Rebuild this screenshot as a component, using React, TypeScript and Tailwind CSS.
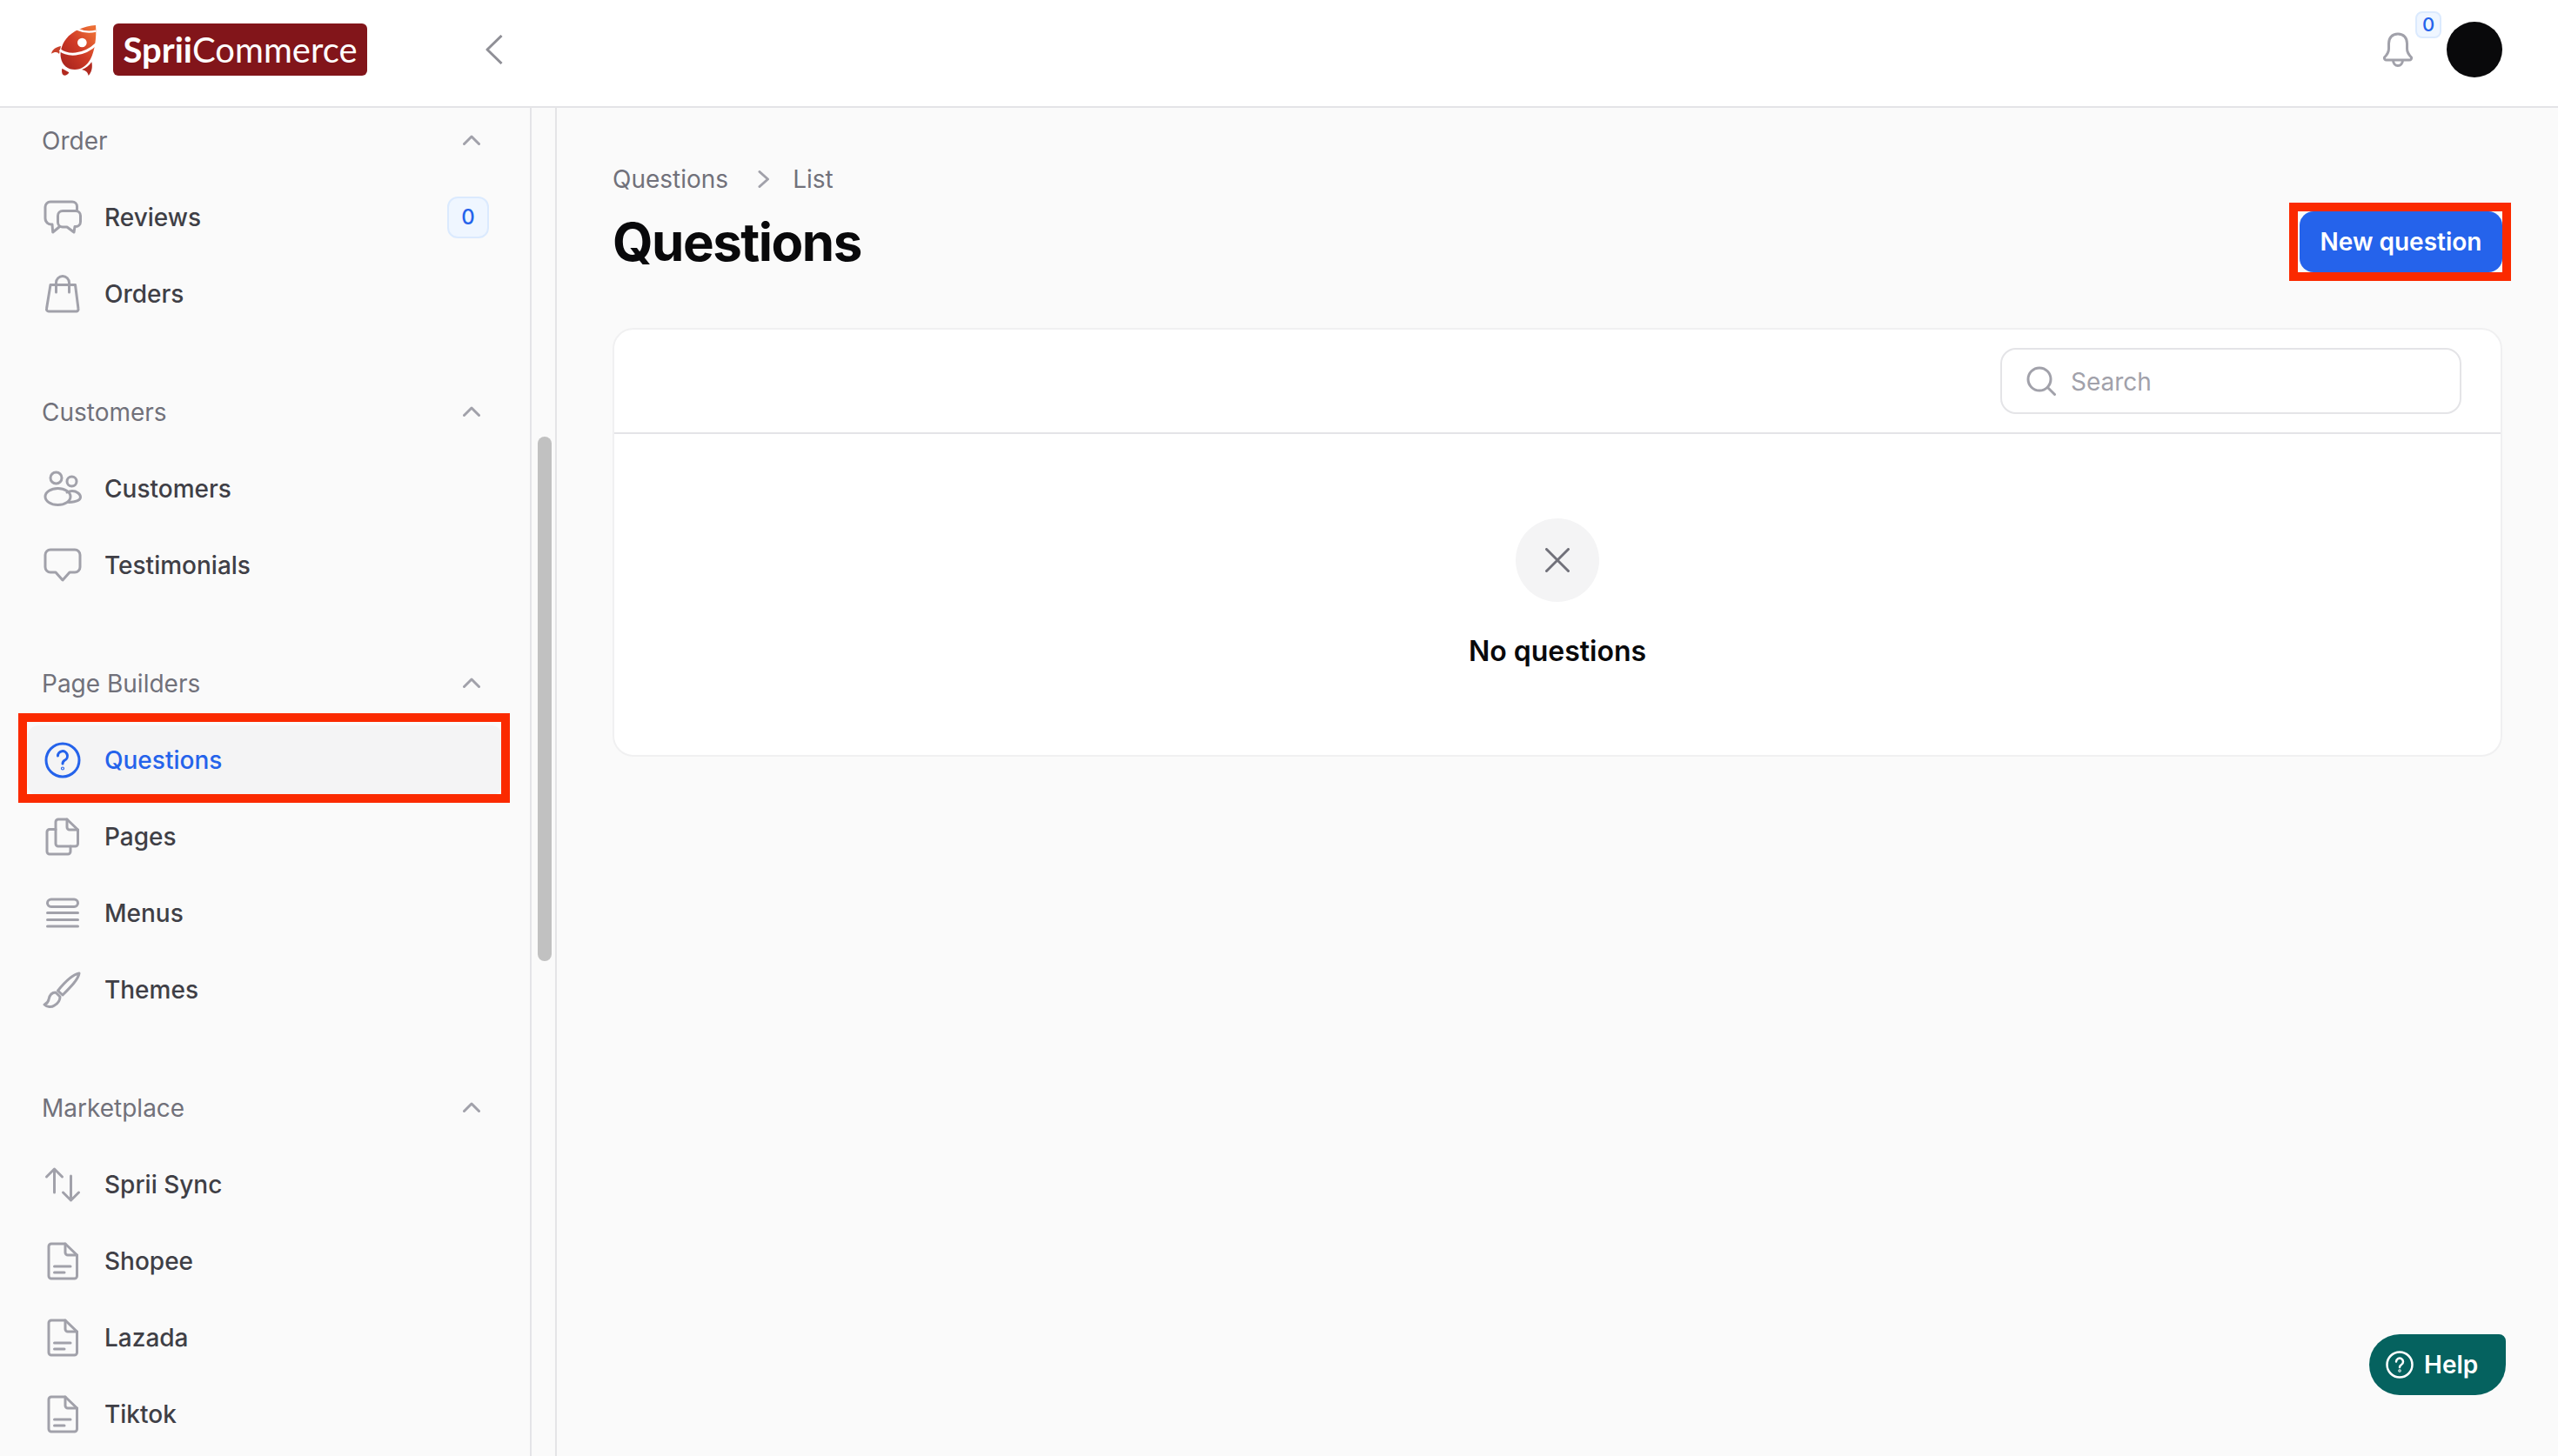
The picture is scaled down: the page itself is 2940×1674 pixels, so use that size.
import React from 'react';

// stroke icons drawn on a 44 box, same weight as the source icon set
const Icon = ({ children, className = 'text-[#a1a1aa]' }: { children: React.ReactNode; className?: string }) => (
  <svg
    width="44"
    height="44"
    viewBox="0 0 44 44"
    fill="none"
    stroke="currentColor"
    strokeWidth="3"
    strokeLinecap="round"
    strokeLinejoin="round"
    className={`shrink-0 overflow-visible ${className}`}
  >
    {children}
  </svg>
);

const ReviewsIcon = () => (
  <Icon>
    <path d="M38.5 13V9.5A5.5 5.5 0 0 0 33 4H8A6 6 0 0 0 2 10V23A7 7 0 0 0 10 30L10.7 39L18 33" />
    <path d="M22 14.5H37A5.5 5.5 0 0 1 42.5 20V27A5.5 5.5 0 0 1 37 32.5H36L35 39L27 33H22A5.5 5.5 0 0 1 16.5 27.5V20A5.5 5.5 0 0 1 22 14.5Z" />
  </Icon>
);

const OrdersIcon = () => (
  <Icon>
    <path d="M8 11.5H36.5L40 39A2.5 2.5 0 0 1 38 42H6A2.5 2.5 0 0 1 3.5 39Z" />
    <path d="M14.5 20V9A7.5 7.5 0 0 1 29.5 9V20" />
  </Icon>
);

const CustomersIcon = () => (
  <Icon>
    <circle cx="14.5" cy="9.5" r="6.5" />
    <circle cx="32.5" cy="13.5" r="5.5" />
    <ellipse cx="16.5" cy="31" rx="14.5" ry="9.5" />
    <path d="M27 26C29 25 31 24.5 33 24.5C38 24.5 42.5 28 42.5 31.5C42.5 35 38 37 29 37.5" />
  </Icon>
);

const TestimonialsIcon = () => (
  <Icon>
    <path d="M8 4H36A6 6 0 0 1 42 10V24A6 6 0 0 1 36 30H30L22 39L14 30H8A6 6 0 0 1 2 24V10A6 6 0 0 1 8 4Z" />
  </Icon>
);

const QuestionsIcon = () => (
  <Icon className="text-[#2563eb]">
    <circle cx="22" cy="22" r="19" />
    <path d="M16.5 17a5.5 5.5 0 1 1 8 5c-1.5.9-2.5 2-2.5 4" />
    <circle cx="22" cy="31.5" r="0.6" />
  </Icon>
);

const PagesIcon = () => (
  <Icon>
    <path d="M14 30V5A3 3 0 0 1 17 2H27L39.5 14V30A3 3 0 0 1 36.5 33H17A3 3 0 0 1 14 30Z" />
    <path d="M27 2V11A3 3 0 0 0 30 14H39.5" />
    <path d="M14 13.5H7A3 3 0 0 0 4 16.5V39A3 3 0 0 0 7 42H28A3 3 0 0 0 31 39V33" />
  </Icon>
);

const MenusIcon = () => (
  <Icon>
    <rect x="4.5" y="6" width="35" height="8.5" rx="4.25" />
    <path d="M4.5 21.5H39.5M4.5 29.5H39.5M4.5 37H39.5" />
  </Icon>
);

const ThemesIcon = () => (
  <Icon>
    <path d="M41 3C35 4 27 10 16.5 23L22 28C31 19 40 10 41 3Z" />
    <path d="M14 25C9 25 7 28 6 33C5.5 37 3 38 1 39C4 42 9 42.5 12.5 40C16 38 19 34 19 30Z" />
  </Icon>
);

const SyncIcon = () => (
  <Icon>
    <path d="M12.5 31V4M3.5 13L12.5 4L21.5 13" />
    <path d="M31.5 12V40M22.5 31L31.5 40L40.5 31" />
  </Icon>
);

const DocIcon = () => (
  <Icon>
    <path d="M9 2H25L38.5 15V39A3 3 0 0 1 35.5 42H9A3 3 0 0 1 6 39V5A3 3 0 0 1 9 2Z" />
    <path d="M25 2V12A3 3 0 0 0 28 15H38.5" />
    <path d="M12.5 28H31M12.5 35H24" />
  </Icon>
);

const Rocket = () => (
  <svg width="80" height="75" viewBox="0 0 240 225" className="shrink-0">
    <defs>
      <linearGradient id="rocketBody" x1="0.9" y1="0.1" x2="0.1" y2="0.9">
        <stop offset="0" stopColor="#ec6e35" />
        <stop offset="0.5" stopColor="#cf3a26" />
        <stop offset="1" stopColor="#ab261e" />
      </linearGradient>
    </defs>
    <path d="M27 125C30 112 42 102 60 99L54 126C49 118 38 118 27 125Z" fill="#c8402a" />
    <path d="M64 176L88 190C84 198 74 203 68 199C63 194 62 185 64 176Z" fill="#b22a20" />
    <path d="M132 180C146 176 158 166 166 154C170 172 166 190 155 201C154 191 146 183 132 180Z" fill="#b22a20" />
    <path d="M180 27C140 30 100 46 78 74C62 94 56 120 60 140C64 164 84 180 108 180C130 180 150 166 162 144C176 118 184 70 180 27Z" fill="url(#rocketBody)" />
    <path d="M116 41C136 50 160 52 181 47" fill="none" stroke="#fff" strokeWidth="7" />
    <path d="M56 112C80 132 136 136 182 92" fill="none" stroke="#fff" strokeWidth="9" />
    <circle cx="133" cy="87" r="16" fill="#fff" />
  </svg>
);

type Item = { label: string; icon: React.ReactNode; badge?: string; active?: boolean };
type Section = { title: string; items: Item[] };

const sections: Section[] = [
  {
    title: 'Order',
    items: [
      { label: 'Reviews', icon: <ReviewsIcon />, badge: '0' },
      { label: 'Orders', icon: <OrdersIcon /> },
    ],
  },
  {
    title: 'Customers',
    items: [
      { label: 'Customers', icon: <CustomersIcon /> },
      { label: 'Testimonials', icon: <TestimonialsIcon /> },
    ],
  },
  {
    title: 'Page Builders',
    items: [
      { label: 'Questions', icon: <QuestionsIcon />, active: true },
      { label: 'Pages', icon: <PagesIcon /> },
      { label: 'Menus', icon: <MenusIcon /> },
      { label: 'Themes', icon: <ThemesIcon /> },
    ],
  },
  {
    title: 'Marketplace',
    items: [
      { label: 'Sprii Sync', icon: <SyncIcon /> },
      { label: 'Shopee', icon: <DocIcon /> },
      { label: 'Lazada', icon: <DocIcon /> },
      { label: 'Tiktok', icon: <DocIcon /> },
    ],
  },
];

const SideRow = ({ item }: { item: Item }) => (
  <div className="py-[4px]">
    <div
      className={`relative flex h-[80px] items-center gap-[26px] rounded-[12px] pl-[18px] pr-[15px] ${
        item.active ? 'bg-[#f4f4f5]' : ''
      }`}
    >
      {item.icon}
      <span className={`text-[28px] font-medium ${item.active ? 'text-[#2563eb]' : 'text-[#3f3f46]'}`}>{item.label}</span>
      {item.badge && (
        <span className="ml-auto flex h-[48px] w-[48px] items-center justify-center rounded-[12px] border-2 border-[#dbeafe] bg-[#eff6ff] text-[24px] font-medium text-[#2563eb]">
          {item.badge}
        </span>
      )}
      {item.active && <div className="absolute -top-[14px] -bottom-[9px] -left-[11px] -right-[9px] border-[10px] border-[#fb2a00]" />}
    </div>
  </div>
);

export default function App() {
  return (
    <div className="flex h-screen flex-col overflow-hidden bg-[#fafafa] font-[Inter,sans-serif]">
      <header className="flex h-[124px] shrink-0 items-center border-b-2 border-[#e4e4e7] bg-white pb-[8px] pl-[50px] pr-[64px]">
        <div className="flex items-center">
          <Rocket />
          <div className="flex h-[60px] w-[292px] items-center justify-center rounded-[6px] bg-[#82151a] font-[Lato,sans-serif] text-[40px] leading-none text-white">
            <span className="font-bold">Sprii</span>
            <span>Commerce</span>
          </div>
        </div>
        <svg width="20" height="34" viewBox="0 0 20 34" fill="none" className="ml-[136px] text-[#8f8f96]">
          <path d="M18.5 1L2 17L18.5 33" stroke="currentColor" strokeWidth="3" strokeLinejoin="round" />
        </svg>
        <div className="ml-auto flex items-center">
          <div className="relative mr-[38px]">
            <svg width="36" height="40" viewBox="0 0 36 40" fill="none" stroke="#a1a1aa" strokeWidth="3" strokeLinejoin="round" className="block">
              <path d="M18 2C11 2 7.5 7 7.5 13V19C7.5 23 5.5 26 2.5 29C2 30.5 3 32 5 32H31C33 32 34 30.5 33.5 29C30.5 26 28.5 23 28.5 19V13C28.5 7 25 2 18 2Z" />
              <path d="M12.5 32C12.5 36 15 38.5 18 38.5C21 38.5 23.5 36 23.5 32" />
            </svg>
            <span className="absolute -top-[24px] left-[38px] flex h-[31px] w-[30px] items-center justify-center rounded-[8px] border-2 border-[#dbeafe] bg-[#eff6ff] text-[22px] font-medium text-[#2563eb]">
              0
            </span>
          </div>
          <div className="h-[64px] w-[64px] rounded-full bg-[#09090b]" />
        </div>
      </header>

      <div className="flex min-h-0 flex-1">
        <aside className="w-[611px] shrink-0 overflow-hidden border-r-2 border-[#e4e4e7]">
          <nav className="-mt-[6px] px-[32px]">
            {sections.map((section) => (
              <div key={section.title} className="mb-[48px]">
                <div className="flex h-[88px] items-center justify-between pl-[16px] pr-[25px]">
                  <span className="text-[28px] text-[#71717a]">{section.title}</span>
                  <svg width="20" height="12" viewBox="0 0 20 12" fill="none" className="-mt-[3px] text-[#a1a1aa]">
                    <path d="M1.5 10.5L10 2L18.5 10.5" stroke="currentColor" strokeWidth="3" strokeLinecap="round" strokeLinejoin="round" />
                  </svg>
                </div>
                {section.items.map((item) => (
                  <SideRow key={item.label} item={item} />
                ))}
              </div>
            ))}
          </nav>
        </aside>

        <div className="w-[27px] shrink-0">
          <div className="ml-[7px] mt-[378px] h-[603px] w-[16px] rounded-full bg-[#c1c1c1]" />
        </div>

        <main className="min-w-0 flex-1 border-l-2 border-[#e4e4e7] pl-[64px] pr-[64px] pt-[62px]">
          <div className="flex h-[40px] items-center text-[28px] text-[#71717a]">
            <span>Questions</span>
            <svg width="14" height="20" viewBox="0 0 14 20" fill="none" className="ml-[34px] mr-[26px] text-[#a1a1aa]">
              <path d="M2 1.5L11.5 10L2 18.5" stroke="currentColor" strokeWidth="3" strokeLinecap="round" strokeLinejoin="round" />
            </svg>
            <span>List</span>
          </div>
          <div className="mt-[16px] flex items-center justify-between">
            <h1 className="text-[60px] font-bold leading-[72px] tracking-[-1.5px] text-[#09090b]">Questions</h1>
            <div className="relative">
              <button className="flex h-[70px] w-[233px] items-center justify-center rounded-[16px] bg-[#2563eb] text-[28px] font-semibold text-white">
                New question
              </button>
              <div className="absolute -top-[10px] -bottom-[10px] -left-[12px] -right-[10px] border-[10px] border-[#fb2a00]" />
            </div>
          </div>

          <section className="mt-[63px] rounded-[24px] border-2 border-[#f0f0f1] bg-white">
            <div className="flex h-[120px] justify-end border-b-2 border-[#e4e4e7] pr-[45px] pt-[21px]">
              <div className="flex h-[76px] w-[530px] items-center gap-[17px] rounded-[18px] border-2 border-[#e4e4e7] pl-[28px]">
                <svg width="34" height="34" viewBox="0 0 34 34" fill="none" stroke="#a1a1aa" strokeWidth="3" strokeLinecap="round">
                  <circle cx="15" cy="15" r="13" />
                  <path d="M24.5 24.5L32.5 32.5" />
                </svg>
                <span className="pt-[2px] text-[28px] text-[#a1a1aa]">Search</span>
              </div>
            </div>
            <div className="flex flex-col items-center pb-[95px] pt-[97px]">
              <div className="flex h-[96px] w-[96px] items-center justify-center rounded-full bg-[#f4f4f5]">
                <svg width="28" height="28" viewBox="0 0 28 28" fill="none" stroke="#71717a" strokeWidth="3" strokeLinecap="round">
                  <path d="M1.5 1.5L26.5 26.5M26.5 1.5L1.5 26.5" />
                </svg>
              </div>
              <p className="mt-[33px] text-[32px] font-semibold leading-[48px] text-[#09090b]">No questions</p>
            </div>
          </section>
        </main>
      </div>

      <button className="fixed bottom-[70px] right-[60px] flex h-[70px] w-[157px] items-center gap-[12px] rounded-bl-[36px] rounded-br-[36px] rounded-tl-[36px] rounded-tr-[8px] bg-[#05625f] pl-[19px] text-[28px] font-semibold text-white">
        <svg width="32" height="32" viewBox="0 0 32 32" fill="none" stroke="currentColor" strokeWidth="2.5" strokeLinecap="round" className="shrink-0">
          <circle cx="16" cy="16" r="14.5" />
          <path d="M12 12.5a4 4 0 1 1 6 3.5c-1.2.7-2 1.5-2 3" />
          <circle cx="16" cy="23" r="0.5" />
        </svg>
        Help
      </button>
    </div>
  );
}
